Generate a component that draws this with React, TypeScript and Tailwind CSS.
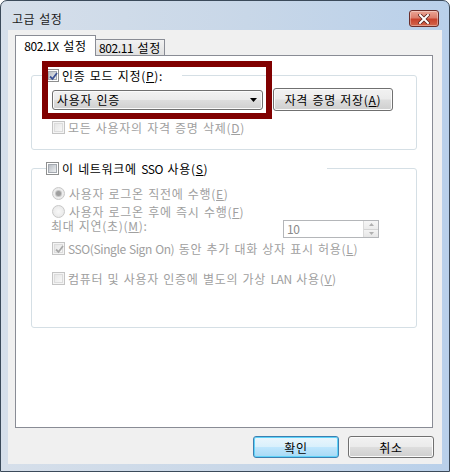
import React from "react";

const font = "font-['Noto_Sans_CJK_KR','Noto_Sans',sans-serif]";
const btnFace =
  "border border-[#707070] rounded-[3px] bg-[linear-gradient(#f2f2f2_0%,#ebebeb_48%,#dddddd_52%,#cfcfcf_100%)] shadow-[inset_0_0_0_1px_#fbfbfb]";

// latin runs are narrower than the hangul in the original dialog font
function Lat({ children }: { children: React.ReactNode }) {
  return <span className="tracking-[-0.4px]">{children}</span>;
}

function CheckBox({ checked = false, disabled = false }: { checked?: boolean; disabled?: boolean }) {
  return (
    <span
      className={`relative inline-flex shrink-0 w-[13px] h-[13px] border items-center justify-center ${
        disabled ? "border-[#c4c4c4] bg-[#f4f4f4]" : "border-[#8e8f8f] bg-white"
      }`}
    >
      <span
        className={`w-[9px] h-[9px] ${
          disabled
            ? "bg-[linear-gradient(135deg,#e6e6e6,#f7f7f7)] border border-[#dcdcdc]"
            : "bg-[linear-gradient(135deg,#b9bec5,#eceef0)] border border-[#a4a9b0]"
        }`}
      />
      {checked && (
        <svg className="absolute left-[1px] top-[1px]" width="11" height="11" viewBox="0 0 11 11">
          <path
            d="M2 5.5 L4.5 8 L9 2"
            fill="none"
            stroke={disabled ? "#a8a8a8" : "#3d5394"}
            strokeWidth="1.8"
          />
        </svg>
      )}
    </span>
  );
}

function Radio({ checked = false }: { checked?: boolean }) {
  return (
    <span className="inline-flex shrink-0 w-[13px] h-[13px] rounded-full border border-[#c8c8c8] bg-[radial-gradient(circle,#f8f8f8,#e4e4e4)] items-center justify-center">
      {checked && <span className="w-[5px] h-[5px] rounded-full bg-[#9e9e9e] shadow-[0_0_0_1px_#c6c6c6]" />}
    </span>
  );
}

function Legend({ width, children }: { width: number; children: React.ReactNode }) {
  return (
    <legend className="p-0">
      <div className="flex items-center h-[13px] bg-white" style={{ width }}>
        {children}
      </div>
    </legend>
  );
}

export default function App() {
  return (
    <div className={`${font} text-[12px] tracking-[0.7px] [word-spacing:1px] w-[450px] h-[472px] flex flex-col border border-[#3b4a5a] rounded-t-[7px] bg-[linear-gradient(90deg,#d6dfea_0%,#c8d7e8_55%,#b9d0ea_100%)] px-[7px] pb-[7px] select-none`}>
      {/* title bar */}
      <div className="h-[29px] shrink-0 flex items-center justify-between pt-[6px] pl-[4px] pr-[3px]">
        <span className="text-[#1b1b1b] leading-[13px] tracking-[0.5px]">고급 설정</span>
        <span className="w-[30px] h-[17px] rounded-[3px] border border-[#6b2e2a] bg-[linear-gradient(#eba595_0%,#dc7e6c_45%,#c8422c_55%,#d4674c_100%)] flex items-center justify-center shadow-[inset_0_0_0_1px_rgba(255,255,255,0.35)]">
          <svg width="12" height="10" viewBox="0 0 12 10">
            <path d="M2 1 L10 9 M10 1 L2 9" stroke="#5a2520" strokeWidth="3.6" strokeLinecap="square" />
            <path d="M2 1 L10 9 M10 1 L2 9" stroke="#ffffff" strokeWidth="2" strokeLinecap="square" />
          </svg>
        </span>
      </div>

      {/* client */}
      <div className="flex-1 bg-[#f0f0f0] flex flex-col pl-[7px] pr-[8px]">
        {/* tabs */}
        <div className="h-[26px] flex items-end relative z-10 -mb-px">
          <div className="w-[81px] h-[21px] border border-b-0 border-[#898c95] bg-white flex items-start justify-center pt-[3px] leading-[13px] text-black">
            <Lat>802.1X</Lat>&nbsp;설정
          </div>
          <div className="w-[69px] h-[16px] mb-px border border-l-0 border-b-0 border-[#898c95] bg-[linear-gradient(#f2f2f2,#e0e0e0)] flex items-center justify-center leading-[13px] text-black">
            <Lat>802.11</Lat>&nbsp;설정
          </div>
        </div>

        {/* panel */}
        <div className="relative w-[418px] h-[373px] border border-[#898c95] bg-white px-[15px]">
          {/* group 1 */}
          <fieldset className="mt-[13px] border border-[#d5dfe5] rounded-[3px] pl-[14px] pr-[14px] pt-[6px] pb-[15px]">
            <Legend width={136}>
              <CheckBox checked />
              <span className="ml-[3px] leading-[13px] text-black whitespace-nowrap">
                인증 모드 지정(<u>P</u>):
              </span>
            </Legend>
            <div className="pl-[6px]">
              <div className="flex items-center h-[23px]">
                <div className={`${btnFace} w-[211px] h-[20px] flex items-center justify-between pl-[4px] pr-[5px]`}>
                  <span className="leading-[13px] text-black">사용자 인증</span>
                  <svg width="7" height="4" viewBox="0 0 7 4">
                    <path d="M0 0 H7 L3.5 4 Z" fill="#000" />
                  </svg>
                </div>
                <div className={`${btnFace} ml-[10px] w-[120px] h-[23px] flex items-center justify-center leading-[13px] text-black whitespace-nowrap`}>
                  자격 증명 저장(<u>A</u>)
                </div>
              </div>
              <div className="mt-[10px] flex items-center h-[13px]">
                <CheckBox disabled />
                <span className="ml-[3px] leading-[13px] text-[#a0a0a0]">
                  모든 사용자의 자격 증명 삭제(<u>D</u>)
                </span>
              </div>
            </div>
          </fieldset>

          {/* group 2 */}
          <fieldset className="mt-[12px] border border-[#d5dfe5] rounded-[3px] pl-[14px] pr-[14px] pt-[12px] pb-[42px]">
            <Legend width={281}>
              <CheckBox />
              <span className="ml-[3px] leading-[13px] text-black whitespace-nowrap">
                이 네트워크에 <Lat>SSO</Lat> 사용(<u>S</u>)
              </span>
            </Legend>
            <div className="pl-[6px] text-[#a0a0a0]">
              <div className="flex items-center h-[13px]">
                <Radio checked />
                <span className="ml-[4px] leading-[13px]">
                  사용자 로그온 직전에 수행(<u>E</u>)
                </span>
              </div>
              <div className="mt-[5px] flex items-center h-[13px]">
                <Radio />
                <span className="ml-[4px] leading-[13px]">
                  사용자 로그온 후에 즉시 수행(<u>F</u>)
                </span>
              </div>
              <div className="flex items-start h-[19px] -ml-px">
                <span className="leading-[13px] mt-px">
                  최대 지연(초)(<u>M</u>):
                </span>
                <div className="ml-auto mr-[23px] mt-[2px] w-[96px] h-[18px] border border-[#b4b6b9] bg-white flex items-stretch">
                  <span className="flex-1 pl-[3px] leading-[16px] text-[#8a8a8a]">
                    <Lat>10</Lat>
                  </span>
                  <div className="w-[15px] flex flex-col border-l border-[#dadada]">
                    <div className="flex-1 bg-[linear-gradient(#f6f6f6,#ebebeb)] border-b border-[#d4d4d4] flex items-center justify-center">
                      <svg width="5" height="3" viewBox="0 0 5 3">
                        <path d="M0 3 H5 L2.5 0 Z" fill="#b0b0b0" />
                      </svg>
                    </div>
                    <div className="flex-1 bg-[linear-gradient(#f3f3f3,#e6e6e6)] flex items-center justify-center">
                      <svg width="5" height="3" viewBox="0 0 5 3">
                        <path d="M0 0 H5 L2.5 3 Z" fill="#b0b0b0" />
                      </svg>
                    </div>
                  </div>
                </div>
              </div>
              <div className="mt-[5px] flex items-center h-[13px]">
                <CheckBox checked disabled />
                <span className="ml-[3px] leading-[13px] whitespace-nowrap">
                  <Lat>SSO(Single Sign On)</Lat> 동안 추가 대화 상자 표시 허용(<u>L</u>)
                </span>
              </div>
              <div className="mt-[17px] flex items-center h-[13px]">
                <CheckBox disabled />
                <span className="ml-[3px] leading-[13px] whitespace-nowrap">
                  컴퓨터 및 사용자 인증에 별도의 가상 <Lat>LAN</Lat> 사용(<u>V</u>)
                </span>
              </div>
            </div>
          </fieldset>

          {/* annotation frame */}
          <div className="absolute left-[26px] top-[5px] w-[230px] h-[58px] border-[6px] border-[#800000] pointer-events-none" />
        </div>

        {/* buttons */}
        <div className="mt-[8px] flex justify-end gap-[9px]">
          <div className="w-[86px] h-[22px] rounded-[3px] border border-[#3c7fb1] bg-[linear-gradient(#eaf6fd_0%,#d9f0fc_48%,#bee6fd_52%,#a7d9f5_100%)] shadow-[inset_0_0_0_1px_#5fd3f9] flex items-center justify-center leading-[13px] text-black">
            확인
          </div>
          <div className={`${btnFace} w-[86px] h-[22px] flex items-center justify-center leading-[13px] text-black`}>
            취소
          </div>
        </div>
      </div>
    </div>
  );
}
